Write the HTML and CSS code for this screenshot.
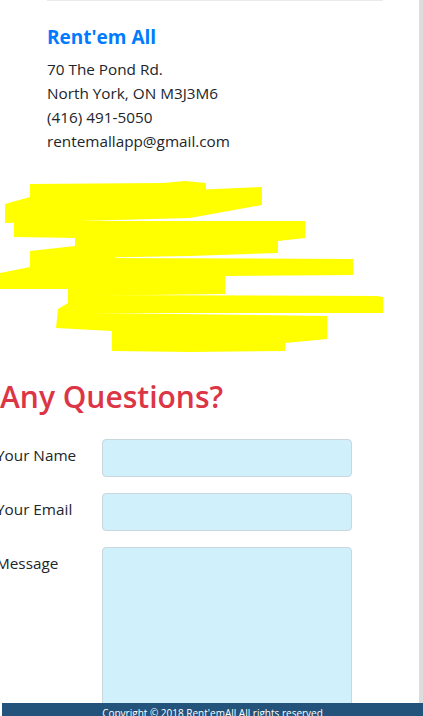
FILE: index.html
```html
<!DOCTYPE html>
<html lang="en">
<head>
<meta charset="utf-8">
<title>Rent'em All - Contact</title>
<link rel="stylesheet" href="styles.css">
</head>
<body>
<div class="page">
  <div class="map-edge"></div>
  <section class="contact-info">
    <h5 class="brand">Rent'em All</h5>
    <address class="address">
      70 The Pond Rd.<br>
      North York, ON M3J3M6<br>
      (416) 491-5050<br>
      rentemallapp@gmail.com
    </address>
  </section>

  <svg class="scribble" viewBox="0 170 419 190" width="419" height="190" aria-hidden="true">
    <g fill="#ffff00">
      <polygon points="30,184 163,183 185,181 206,183 206,200 30,203"/>
      <polygon points="5,204 30,197 262,187 262,205 190,218 5,223"/>
      <polygon points="14,221 305,221 305,238 278,241 14,237"/>
      <polygon points="75,236 278,238 278,253 190,256 75,258"/>
      <polygon points="30,251 75,246 115,245 115,277 30,277"/>
      <polygon points="0,273 30,267 68,266 68,289 0,289"/>
      <polygon points="100,258 353,259 353,275 100,277"/>
      <polygon points="68,275 225,276 225,294 68,296"/>
      <polygon points="68,295 377,296 383,297 383,313 68,313"/>
      <polygon points="58,309 68,303 95,313 327,316 327,339 285,343 112,331 56,328"/>
      <polygon points="112,328 285,328 285,351 190,352 112,351"/>
    </g>
  </svg>

  <h2 class="questions">Any Questions?</h2>
  <form class="contact-form">
    <div class="form-row">
      <label class="form-label" for="name">Your Name</label>
      <input class="form-field" id="name" type="text">
    </div>
    <div class="form-row">
      <label class="form-label" for="email">Your Email</label>
      <input class="form-field" id="email" type="email">
    </div>
    <div class="form-row">
      <label class="form-label" for="msg">Message</label>
      <textarea class="form-field form-textarea" id="msg"></textarea>
    </div>
  </form>
</div>
<footer class="site-footer">Copyright © 2018 Rent'emAll All rights reserved</footer>
</body>
</html>
```
FILE: styles.css
```css
html, body {
  margin: 0;
  padding: 0;
  background: #ffffff;
}
body {
  font-family: "Open Sans", "Noto Sans", sans-serif;
  color: #212529;
  font-size: 15.3px;
}
.page {
  border-right: 4px solid #dcdcdc;
  min-height: 100vh;
  box-sizing: border-box;
  overflow: hidden;
}
.map-edge {
  height: 1px;
  width: 336px;
  margin-left: 47px;
  background: #e8ebea;
}
.contact-info {
  padding-left: 47px;
}
.brand {
  margin: 24px 0 0;
  font-size: 19px;
  line-height: 24px;
  font-weight: 700;
  color: #007bff;
}
.address {
  margin: 8px 0 0;
  font-style: normal;
  font-size: 15.3px;
  line-height: 24px;
}
.scribble {
  display: block;
  margin-top: 17px;
}
.questions {
  margin: 18px 0 0;
  font-size: 30px;
  line-height: 38px;
  font-weight: 600;
  color: #dc3545;
}
.contact-form {
  margin-top: 23px;
  margin-left: -4px;
}
.form-row {
  display: flex;
  align-items: flex-start;
  margin-bottom: 16px;
}
.form-label {
  width: 106px;
  flex: none;
  padding-top: 4px;
  line-height: 24px;
  font-size: 15.3px;
}
.form-field {
  width: 250px;
  height: 38px;
  box-sizing: border-box;
  border: 1px solid #c9d6dc;
  border-radius: 4px;
  background: #d0f0fc;
  margin: 0;
  padding: 6px 12px;
  font: inherit;
}
.form-textarea {
  height: 190px;
  resize: none;
}
.site-footer {
  position: fixed;
  left: 2px;
  right: 0;
  bottom: 0;
  height: 13px;
  overflow: hidden;
  background: #23527a;
  color: #ffffff;
  font-size: 10px;
  line-height: 14px;
  padding-top: 3px;
  box-sizing: border-box;
  text-align: center;
}
```
